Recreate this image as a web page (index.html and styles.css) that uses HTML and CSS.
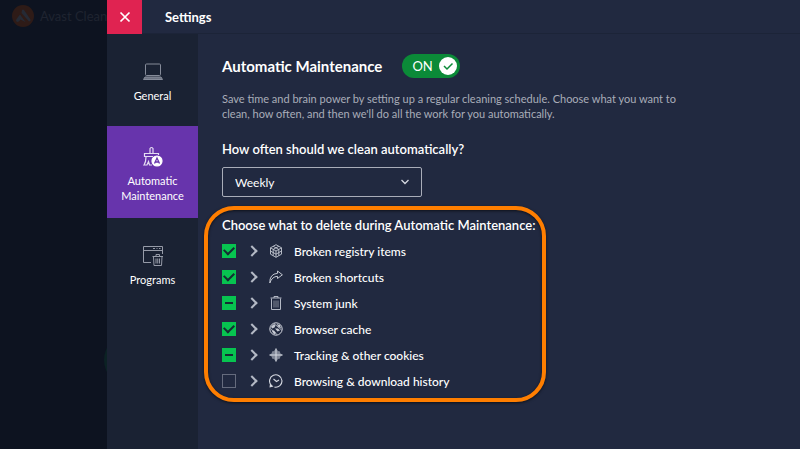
FILE: index.html
```html
<!DOCTYPE html>
<html lang="en">
<head>
    <meta charset="UTF-8">
    <meta name="viewport" content="width=device-width, initial-scale=1.0">
    <title>Settings</title>
    <link rel="stylesheet" href="styles.css">
</head>
<body>
    <!-- Dimmed app window behind the panel -->
    <div class="backdrop">
        <div class="brand">
            <svg width="22" height="22" viewBox="0 0 22 22">
                <circle cx="11" cy="11" r="11" fill="#2e1b17"/>
                <path d="M10 5 Q11 4 12 5 L18.500 14.500 Q19 16.500 17 16.500 L9.500 8 Z M8 9.500 L13.500 17 L8.500 14.500 Q6.500 18 4.500 16.500 Q3.500 15.500 4.500 14 Z" fill="#252a35"/>
            </svg>
            <span>Avast Clean</span>
        </div>
        <div class="glow"></div>
    </div>

    <div class="panel">
        <header>
            <button class="close" type="button" aria-label="Close">
                <svg width="12" height="12" viewBox="0 0 12 12" fill="none" stroke="#fff" stroke-width="1.700">
                    <path d="M1.5 1.5 L10.5 10.5 M10.5 1.5 L1.5 10.5"/>
                </svg>
            </button>
            <h1>Settings</h1>
        </header>

        <div class="body">
            <nav>
                <a href="#general">
                    <svg width="22" height="22" viewBox="0 0 22 22" fill="none" stroke="#858b99">
                        <rect x="3.5" y="3" width="15" height="11.5" rx="1"/>
                        <path d="M3 16 H19 L20.5 18.5 H1.5 Z" fill="#6d7382"/>
                    </svg>
                    <span>General</span>
                </a>
                <a href="#maintenance" class="active">
                    <svg width="22" height="22" viewBox="0 0 22 22" fill="none" stroke="#e4dcf2" stroke-width="1.2">
                        <path d="M8 7 V2.500 Q9.500 0.500 11 2.500 V7 M2.500 11 V7.500 H16.500 V9 M2.500 10.500 H11 M4 11 Q4 16 2 19 H5 L6.500 15.500 L7.500 19 H10"/>
                        <circle cx="15" cy="15" r="5" fill="#fff" stroke="#fff"/>
                        <path d="M12.500 17.500 L15 12 L17.500 17.500 M13.500 16 H16.500" stroke="#6734ac" stroke-width="1.300"/>
                    </svg>
                    <span>Automatic Maintenance</span>
                </a>
                <a href="#programs">
                    <svg width="22" height="22" viewBox="0 0 22 22" fill="none" stroke="#969ba8">
                        <path d="M9 17.500 H1.500 V1.500 H20.500 V9 M1.500 5.500 H20.500 M11 3.500 H13 M14.500 3.500 H15.500 M17 3.500 H18.500"/>
                        <path d="M10.500 11.500 H21 M14 11 V9.500 H17.500 V11 M11.500 12 L12 20.500 H19.500 L20 12 M14 13.500 V18.500 M15.750 13.500 V18.500 M17.500 13.500 V18.500"/>
                    </svg>
                    <span>Programs</span>
                </a>
            </nav>

            <main>
                <div class="title">
                    <h2>Automatic Maintenance</h2>
                    <label class="switch">
                        <input type="checkbox" aria-label="Automatic Maintenance" checked>
                        <span class="state">ON</span>
                        <span class="knob">
                            <svg width="12" height="12" viewBox="0 0 12 12" fill="none" stroke="#0b8a38" stroke-width="1.500">
                                <path d="M2 6 L5 9 L10.500 3.500"/>
                            </svg>
                        </span>
                    </label>
                </div>
                <p>Save time and brain power by setting up a regular cleaning schedule. Choose what you want to clean, how often, and then we'll do all the work for you automatically.</p>

                <label class="question" for="frequency">How often should we clean automatically?</label>
                <div class="select">
                    <select id="frequency">
                        <option>Daily</option>
                        <option selected>Weekly</option>
                        <option>Monthly</option>
                    </select>
                    <svg width="10" height="10" viewBox="0 0 10 10" fill="none" stroke="#d5d8e0" stroke-width="1.300">
                        <path d="M1.500 3 L5 6.500 L8.500 3"/>
                    </svg>
                </div>

                <section class="choices">
                    <h3>Choose what to delete during Automatic Maintenance:</h3>
                    <ul>
                        <li>
                            <input type="checkbox" id="registry" checked>
                            <button class="expand" type="button" aria-label="Expand"></button>
                            <svg width="14" height="14" viewBox="0 0 14 14" fill="none" stroke="#c3c7d1" stroke-width="0.900">
                                <path d="M7 0.700 L12.500 3.800 V10.200 L7 13.300 L1.500 10.200 V3.800 Z M1.500 3.800 L7 7 L12.500 3.800 M7 7 V13.300 M4.200 2.300 L9.800 5.400 V11.700 M9.800 2.300 L4.200 5.400 V11.700 M1.500 7 L7 10.200 L12.500 7"/>
                            </svg>
                            <label for="registry">Broken registry items</label>
                        </li>
                        <li>
                            <input type="checkbox" id="shortcuts" checked>
                            <button class="expand" type="button" aria-label="Expand"></button>
                            <svg width="14" height="14" viewBox="0 0 14 14" fill="none" stroke="#c3c7d1" stroke-linejoin="round">
                                <path d="M8.500 1 L13.400 4.800 L8.500 8.500 V6.300 Q3 6.500 0.800 13 Q0.500 4 8.500 3.300 Z"/>
                            </svg>
                            <label for="shortcuts">Broken shortcuts</label>
                        </li>
                        <li>
                            <input type="checkbox" id="junk" class="partial">
                            <button class="expand" type="button" aria-label="Expand"></button>
                            <svg width="14" height="14" viewBox="0 0 14 14" fill="none" stroke="#b4b9c5">
                                <path d="M1.500 2 H12.500 M5 2 V0.500 H9 V2 M2.500 2.500 V13.500 H11.500 V2.500"/>
                                <path d="M5 4.500 V11.500 M7 4.500 V11.500 M9 4.500 V11.500" stroke="#858b99"/>
                            </svg>
                            <label for="junk">System junk</label>
                        </li>
                        <li>
                            <input type="checkbox" id="cache" checked>
                            <button class="expand" type="button" aria-label="Expand"></button>
                            <svg width="14" height="14" viewBox="0 0 14 14" fill="none" stroke="#d5d8e0">
                                <circle cx="7" cy="7" r="6.200"/>
                                <path d="M2 4.500 L5 2 L6.500 3.500 L5.500 5.500 L3 6.500 Z M7.500 2 L11 3 L12 6.500 L9.500 5 Z M6 6.500 L9 6.500 L11 8.500 L8.500 9.500 Z M2.500 8.500 L5 8.500 L7 11 L5 12.500 Z" fill="#c3c7d1" stroke="none"/>
                                <path d="M5 1.500 L12.500 8 M1.500 6.500 L8 12.500" stroke-width="0.700"/>
                            </svg>
                            <label for="cache">Browser cache</label>
                        </li>
                        <li>
                            <input type="checkbox" id="cookies" class="partial">
                            <button class="expand" type="button" aria-label="Expand"></button>
                            <svg width="14" height="14" viewBox="0 0 14 14" fill="none" stroke="#d5d8e0">
                                <path d="M7 0.300 L9 3 L11 3.500 L11.200 5.200 L13.700 7 L11.200 8.800 L11 10.500 L9 11 L7 13.700 L5 11 L3 10.500 L2.800 8.800 L0.300 7 L2.800 5.200 L3 3.500 L5 3 Z" fill="#7f8595" stroke="none"/>
                                <path d="M7 0.500 V13.500 M0.500 7 H13.500"/>
                            </svg>
                            <label for="cookies">Tracking &amp; other cookies</label>
                        </li>
                        <li>
                            <input type="checkbox" id="history">
                            <button class="expand" type="button" aria-label="Expand"></button>
                            <svg width="14" height="14" viewBox="0 0 14 14" fill="none" stroke="#d5d8e0" stroke-width="1.100">
                                <path d="M2 11 A6.200 6.200 0 1 1 5.500 13.100 M4.500 5 L7.500 7.500 L10 6"/>
                                <path d="M0.500 13.500 L1 9.500 L4.500 12.500 Z" fill="#d5d8e0" stroke="none"/>
                            </svg>
                            <label for="history">Browsing &amp; download history</label>
                        </li>
                    </ul>
                </section>
            </main>
        </div>
    </div>

    <script src="script.js"></script>
</body>
</html>
```
FILE: styles.css
```css
* {
    box-sizing: border-box;
}

html, body {
    height: 100%;
    margin: 0;
}

body {
    display: flex;
    background-color: #0d1320;
    color: #fff;
    font-family: Lato, "Open Sans", sans-serif;
    font-size: 12px;
}

h1, h2, h3, p, ul {
    margin: 0;
    padding: 0;
}

button {
    border: 0;
    padding: 0;
    cursor: pointer;
}

svg {
    display: block;
    flex: none;
}

/* Backdrop */
.backdrop {
    position: relative;
    flex: 0 0 107px;
    overflow: hidden;
    background-color: #0d1320;
}

.brand {
    display: flex;
    align-items: center;
    gap: 6px;
    padding: 5px 0 0 12px;
    color: #1f2430;
    font-size: 13px;
    white-space: nowrap;
}

.glow {
    position: absolute;
    right: -49px;
    top: 334px;
    width: 52px;
    height: 52px;
    border-radius: 50%;
    background-color: #0c2224;
}

/* Panel */
.panel {
    display: flex;
    flex-direction: column;
    flex: 1;
    min-width: 0;
    min-height: 100%;
    background-color: #212940;
}

header {
    display: flex;
    align-items: center;
    gap: 23px;
    height: 34px;
    border-bottom: 1px solid #1c2438;
}

.close {
    display: flex;
    align-items: center;
    justify-content: center;
    width: 35px;
    height: 34px;
    background-color: #e02351;
}

h1 {
    font-size: 13px;
    font-weight: 700;
}

.body {
    display: flex;
    flex: 1;
}

/* Sidebar */
nav {
    flex: 0 0 91px;
    background-color: #1a2233;
}

nav a {
    display: flex;
    flex-direction: column;
    align-items: center;
    justify-content: center;
    gap: 5px;
    height: 92px;
    padding: 4px 8px 0;
    color: #fff;
    font-size: 11px;
    line-height: 15px;
    text-align: center;
    text-decoration: none;
}

nav a.active {
    background-color: #6734ac;
}

/* Content */
main {
    flex: 1;
    min-width: 0;
    padding: 20px 24px;
}

.title {
    display: flex;
    align-items: center;
    gap: 20px;
}

h2 {
    font-size: 15px;
    font-weight: 700;
}

.switch {
    display: flex;
    align-items: center;
    justify-content: space-between;
    width: 58px;
    height: 24px;
    padding: 0 3px 0 10px;
    border-radius: 12px;
    background-color: #0b8a38;
    font-size: 13px;
    cursor: pointer;
}

.switch input {
    position: absolute;
    opacity: 0;
    margin: 0;
}

.knob {
    display: flex;
    align-items: center;
    justify-content: center;
    width: 18px;
    height: 18px;
    border-radius: 50%;
    background-color: #fff;
}

p {
    max-width: 470px;
    margin-top: 13px;
    color: #a9adb9;
    font-size: 11px;
    line-height: 15px;
}

.question {
    display: block;
    margin-top: 20px;
    font-size: 13px;
    font-weight: 600;
    line-height: 16px;
}

.select {
    position: relative;
    width: 200px;
    margin-top: 10px;
}

.select svg {
    position: absolute;
    right: 12px;
    top: 10px;
    pointer-events: none;
}

select {
    display: block;
    width: 100%;
    height: 30px;
    padding: 0 12px;
    border: 1px solid #a9adb9;
    border-radius: 2px;
    appearance: none;
    background-color: transparent;
    color: #fff;
    font: inherit;
}

/* Highlighted list */
.choices {
    width: 342px;
    margin: 9px 0 0 -18px;
    padding: 7px 10px 4px 14px;
    border: 4px solid #ff7e00;
    border-radius: 30px;
    box-shadow: 0 1px 3px rgba(0, 0, 0, 0.6), inset 0 1px 3px rgba(0, 0, 0, 0.6);
}

h3 {
    font-size: 13px;
    font-weight: 600;
    line-height: 16px;
    white-space: nowrap;
}

ul {
    margin-top: 5px;
    list-style: none;
}

li {
    display: flex;
    align-items: center;
    height: 26px;
    color: #fff;
}

li label {
    margin-left: 11px;
    font-weight: 500;
}

li input {
    display: flex;
    align-items: center;
    justify-content: center;
    width: 14px;
    height: 14px;
    margin: 0;
    border: 1px solid #656b7d;
    appearance: none;
}

li input:checked, li input:indeterminate {
    border-color: #07c450;
    background-color: #07c450;
}

li input:checked::before {
    content: "";
    width: 8px;
    height: 5px;
    margin-bottom: 3px;
    border: solid #162c33;
    border-width: 0 0 2px 2px;
    transform: rotate(-45deg);
}

li input:indeterminate::before {
    content: "";
    width: 8px;
    height: 2px;
    background-color: #162c33;
}

.expand {
    display: flex;
    align-items: center;
    justify-content: center;
    width: 14px;
    height: 14px;
    margin: 0 10px 0 9px;
    background-color: transparent;
}

.expand::before {
    content: "";
    width: 6px;
    height: 6px;
    border: solid #b4b9c5;
    border-width: 2px 2px 0 0;
    transform: rotate(45deg);
}
```
FILE: script.js
```js
document.querySelectorAll('.partial').forEach(box => {
    box.indeterminate = true;
});

const toggle = document.querySelector('.switch input');
toggle.addEventListener('change', () => {
    document.querySelector('.state').textContent = toggle.checked ? 'ON' : 'OFF';
});
```
